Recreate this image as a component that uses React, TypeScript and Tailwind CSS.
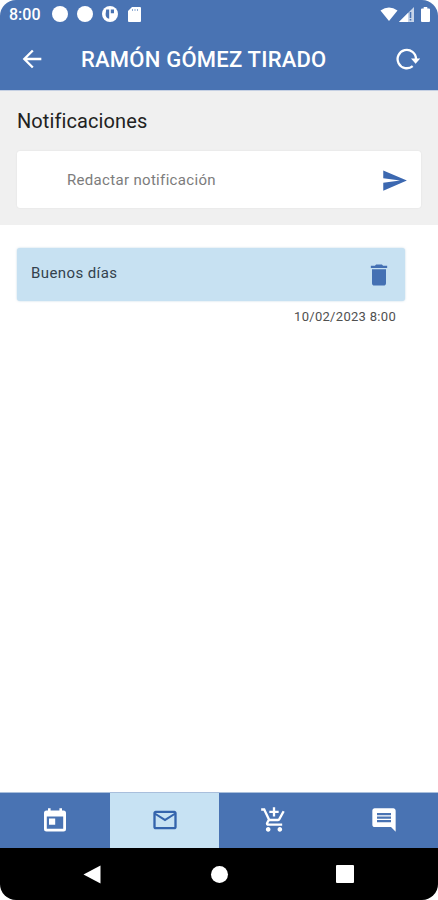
import {
  MdAddShoppingCart,
  MdArrowBack,
  MdComment,
  MdDelete,
  MdMailOutline,
  MdSend,
} from 'react-icons/md'

function CalendarIcon({ className }: { className?: string }) {
  return (
    <svg className={className} viewBox="0 0 28 28" fill="currentColor">
      <path
        fillRule="evenodd"
        d="M7 2.200h2.600V4.500h8.800V2.200H21v2.300h1.500q2.500 0 2.500 2.500v16q0 2.500-2.500 2.500h-17Q3 25.500 3 23V7q0-2.500 2.500-2.500H7zM5.800 10.500v12.300h16.400V10.500z"
      />
      <path d="M8 12.500h6.200v6.200H8z" />
    </svg>
  )
}

const tabs = [
  { label: 'Agenda', icon: CalendarIcon },
  { label: 'Notificaciones', icon: MdMailOutline, active: true },
  { label: 'Compras', icon: MdAddShoppingCart },
  { label: 'Mensajes', icon: MdComment },
]

function StatusBar() {
  return (
    <div className="flex h-7 items-center pl-[9px] pr-2 text-white">
      <span className="w-[43px] pt-0.5 text-[16px] leading-none font-medium">8:00</span>
      <span className="size-4 rounded-full bg-white" />
      <span className="ml-[9px] size-4 rounded-full bg-white" />
      <svg className="ml-[9px] size-4" viewBox="0 0 16 16">
        <circle cx="8" cy="8" r="8" fill="#fff" />
        <path d="M4.200 3.600h3v9.200C4.800 12.600 3.400 10.500 3.600 8z" fill="#4973b3" />
        <path d="M8.800 3.600H12v3.600H8.800z" fill="#4973b3" />
      </svg>
      <svg className="ml-[10px] h-[15px] w-[13px]" viewBox="0 0 13 15">
        <path d="M4 0h8q1 0 1 1v13q0 1-1 1H1q-1 0-1-1V4z" fill="#fff" />
        <path d="M4.500 2v2M7 2v2M9.500 2v2" stroke="#8fabd2" strokeWidth="1" />
      </svg>
      <div className="ml-auto flex items-center">
        <svg className="h-[15px] w-[18px]" viewBox="0 0 18 15">
          <path d="M0.500 3.600Q9-2.800 17.500 3.600L9 14z" fill="#fff" />
        </svg>
        <svg className="ml-px h-[15px] w-[15px]" viewBox="0 0 15 15">
          <path d="M15 0v15H0z" fill="#c8d5e9" />
          <path d="M9 6v9H0z" fill="#fff" />
          <path d="M11.500 5v6M11.500 12v1.500" stroke="#4973b3" strokeWidth="1.600" />
        </svg>
        <svg className="ml-[7px] h-[15px] w-[9px]" viewBox="0 0 9 15">
          <path d="M2.700 0h3.600v1.500H8q1 0 1 1V14q0 1-1 1H1q-1 0-1-1V2.500q0-1 1-1h1.700z" fill="#fff" />
        </svg>
      </div>
    </div>
  )
}

function Header() {
  return (
    <div className="flex h-[61px] items-center pl-[18px] pr-[18px] text-white">
      <button type="button" aria-label="Volver">
        <MdArrowBack className="size-7" />
      </button>
      <h1 className="ml-[35px] pt-0.5 text-[22px] font-medium tracking-[0.22px] whitespace-nowrap">
        RAMÓN GÓMEZ TIRADO
      </h1>
      <button type="button" aria-label="Actualizar" className="ml-auto">
        <svg className="size-6" viewBox="0 0 24 24">
          <path
            d="M16.700 19.100A9.200 9.200 0 1 1 20 12"
            fill="none"
            stroke="#fff"
            strokeWidth="2.300"
          />
          <path d="M15 11.500H24.200l-4.600 5.200z" fill="#fff" />
        </svg>
      </button>
    </div>
  )
}

export default function App() {
  return (
    <div className="h-[900px] w-[438px] bg-white font-[Roboto,sans-serif]">
      <div className="flex h-full flex-col overflow-hidden rounded-[16px] bg-white">
        <header className="h-[91px] shrink-0 border-b border-[#c5d0e3] bg-[#4973b3]">
          <StatusBar />
          <Header />
        </header>

        <section className="h-[134px] shrink-0 bg-[#f0f0f0] px-[17px] pt-[15px]">
          <h2 className="text-[20px] leading-[30px] tracking-[0.1px] text-[#222]">Notificaciones</h2>
          <div className="mt-[15px] flex h-[57px] items-center rounded-[3px] bg-white pr-[13px] pl-[50px] shadow-[0_0_2px_rgba(0,0,0,0.08)]">
            <span className="flex-1 pt-0.5 text-[15px] tracking-[0.32px] text-[#7c7c7c]">
              Redactar notificación
            </span>
            <MdSend className="mt-0.5 size-[27px] text-[#3c68b0]" />
          </div>
        </section>

        <main className="flex-1 pt-[23px] pr-[33px] pl-[17px]">
          <div className="flex h-[53px] items-center justify-between rounded-[3px] bg-[#c7e1f2] pr-[12px] pl-[14px] shadow-[0_0_2px_rgba(120,170,200,0.5)]">
            <span className="-mt-0.5 text-[15px] tracking-[0.4px] text-[#33424d]">Buenos días</span>
            <MdDelete className="size-7 text-[#4470b3]" />
          </div>
          <p className="mt-[6px] pr-[9px] text-right text-[13px] leading-5 tracking-[0.3px] text-[#505050]">
            10/02/2023 8:00
          </p>
        </main>

        <nav className="grid h-[56px] shrink-0 grid-cols-4 border-t border-[#a9bfdc] bg-[#4973b3]">
          {tabs.map(({ label, icon: Icon, active }) => (
            <button
              key={label}
              type="button"
              aria-label={label}
              className={`flex items-center justify-center pb-0.5 pl-px ${
                active ? 'bg-[#c7e2f3] text-[#3464ac]' : 'text-white'
              }`}
            >
              <Icon className="size-7" />
            </button>
          ))}
        </nav>

        {/* Android navigation */}
        <div className="flex h-[52px] shrink-0 items-center bg-black pl-[83px]">
          <svg className="h-[19px] w-[18px]" viewBox="0 0 18 19">
            <path d="M17.500.5v18L.5 9.500z" fill="#fff" />
          </svg>
          <span className="ml-[110px] size-[17px] rounded-full bg-white" />
          <span className="ml-[108px] size-[18px] rounded-[1px] bg-white" />
        </div>
      </div>
    </div>
  )
}
